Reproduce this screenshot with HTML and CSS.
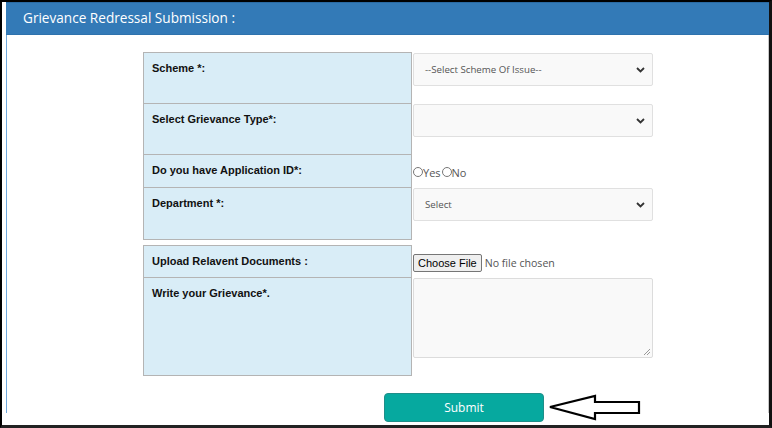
FILE: index.html
```html
<!DOCTYPE html>
<html lang="en">
<head>
<meta charset="utf-8">
<title>Grievance Redressal Submission</title>
<link rel="stylesheet" href="styles.css">
</head>
<body>
<div class="frame">
  <div class="panel">
    <div class="panel-heading">Grievance Redressal Submission :</div>
    <div class="panel-body">
      <div class="form-grid">
        <div class="lbl h1">Scheme *:</div>
        <div class="ctl">
          <div class="select"><span>--Select Scheme Of Issue--</span>
            <svg class="chev" width="9" height="6" viewBox="0 0 9 6"><path d="M1 1 L4.5 4.5 L8 1" fill="none" stroke="#333" stroke-width="1.8"/></svg>
          </div>
        </div>
        <div class="lbl h2">Select Grievance Type*:</div>
        <div class="ctl">
          <div class="select"><span></span>
            <svg class="chev" width="9" height="6" viewBox="0 0 9 6"><path d="M1 1 L4.5 4.5 L8 1" fill="none" stroke="#333" stroke-width="1.8"/></svg>
          </div>
        </div>
        <div class="lbl h3">Do you have Application ID*:</div>
        <div class="ctl mid">
          <div class="radios">
            <span class="radio"></span><span class="rtext">Yes</span>
            <span class="radio"></span><span class="rtext">No</span>
          </div>
        </div>
        <div class="lbl h4">Department *:</div>
        <div class="ctl">
          <div class="select"><span>Select</span>
            <svg class="chev" width="9" height="6" viewBox="0 0 9 6"><path d="M1 1 L4.5 4.5 L8 1" fill="none" stroke="#333" stroke-width="1.8"/></svg>
          </div>
        </div>
      </div>

      <div class="form-grid second">
        <div class="lbl h5">Upload Relavent Documents :</div>
        <div class="ctl mid">
          <div class="file">
            <button class="file-btn" type="button">Choose File</button>
            <span class="file-text">No file chosen</span>
          </div>
        </div>
        <div class="lbl h6">Write your Grievance*.</div>
        <div class="ctl">
          <div class="textarea">
            <svg class="grip" width="8" height="8" viewBox="0 0 8 8"><path d="M7 1 L1 7 M7 4 L4 7" stroke="#999" stroke-width="1"/></svg>
          </div>
        </div>
      </div>

      <div class="actions">
        <button class="submit" type="button">Submit</button>
        <svg class="arrow" width="96" height="28" viewBox="0 0 96 28">
          <path d="M3 13 L48 2 L48 8 L92 8 L92 19 L48 19 L48 25 Z" fill="#fff" stroke="#000" stroke-width="2.2" stroke-linejoin="miter"/>
        </svg>
      </div>
    </div>
  </div>
</div>
</body>
</html>
```
FILE: styles.css
```css
* { box-sizing: border-box; }
html, body { margin: 0; padding: 0; background: #fff; }

.frame {
  width: 772px;
  height: 428px;
  border-top: 2px solid #000;
  border-left: 2px solid #000;
  border-right: 3px solid #111;
  border-bottom: 3px solid #222;
  overflow: hidden;
}

.panel {
  margin-left: 4px;
  width: 763px;
  height: 411px;
  border-left: 1px solid #6fa8dc;
  border-right: 1px solid #c8c8c8;
}

.panel-heading {
  margin-left: -1px;
  margin-right: -1px;
  height: 33px;
  background: #337ab7;
  border-top: 1px solid #2a6aa3;
  border-bottom: 1px solid #2e72ad;
  color: #fff;
  font-family: "Open Sans", sans-serif;
  font-size: 13.6px;
  line-height: 30px;
  padding-left: 17px;
}

.panel-body {
  padding-top: 17px;
}

.form-grid {
  margin-left: 136px;
  display: grid;
  grid-template-columns: 269px 244px;
}
.form-grid.second { margin-top: 5px; }

.lbl {
  background: #d9edf7;
  border: 1px solid #b4b4b4;
  margin-top: -1px;
  padding: 8px 8px 0 8px;
  font-family: "Liberation Sans", Arial, sans-serif;
  font-weight: bold;
  font-size: 11px;
  line-height: 14px;
  color: #111;
}
.lbl.h1 { margin-top: 0; height: 52px; }
.lbl.h2 { height: 52px; }
.lbl.h3 { height: 34px; }
.lbl.h4 { height: 53px; }
.lbl.h5 { margin-top: 0; height: 33px; }
.lbl.h6 { height: 99px; }

.ctl {
  padding: 1px 0 0 1px;
  margin-top: -1px;
}
.form-grid > .ctl:nth-child(2) { margin-top: 0; }
.ctl.mid {
  display: flex;
  align-items: center;
  padding-top: 0;
}

.select {
  width: 240px;
  height: 33px;
  background: #f9f9f9;
  border: 1px solid #e0e0e0;
  border-radius: 2px;
  display: flex;
  align-items: center;
  justify-content: space-between;
  padding: 0 7px 0 11px;
  font-family: "Open Sans", sans-serif;
  font-size: 9.7px;
  color: #555;
}
.chev { display: block; }

.radios {
  display: flex;
  align-items: center;
  font-family: "Open Sans", sans-serif;
  font-size: 11px;
  color: #555;
  margin-top: 2px;
}
.radio {
  width: 10px;
  height: 10px;
  border: 1px solid #777;
  border-radius: 50%;
  background: #fff;
  display: inline-block;
}
.rtext { margin-right: 1px; margin-left: 0; }

.file {
  display: flex;
  align-items: center;
  margin-top: 2px;
}
.file-btn {
  font-family: "Liberation Sans", Arial, sans-serif;
  font-size: 11px;
  height: 18px;
  padding: 0 4px;
  background: #efefef;
  border: 1px solid #767676;
  border-radius: 2px;
  color: #000;
  line-height: 14px;
}
.file-text {
  font-family: "Open Sans", sans-serif;
  font-size: 10.6px;
  color: #555;
  margin-left: 3px;
}

.textarea {
  width: 240px;
  height: 80px;
  background: #f9f9f9;
  border: 1px solid #dcdcdc;
  border-radius: 2px;
  display: flex;
  align-items: flex-end;
  justify-content: flex-end;
  padding: 0 1px 1px 0;
}

.actions {
  margin-top: 17px;
  margin-left: 377px;
  display: flex;
  align-items: center;
  gap: 3px;
}
.submit {
  width: 160px;
  height: 29px;
  background: #06a99f;
  border: 1px solid #1f8e89;
  border-radius: 4px;
  color: #fff;
  font-family: "Open Sans", sans-serif;
  font-size: 12px;
  font-weight: 500;
  padding: 0;
}
.arrow { display: block; margin-top: 1px; }
```
